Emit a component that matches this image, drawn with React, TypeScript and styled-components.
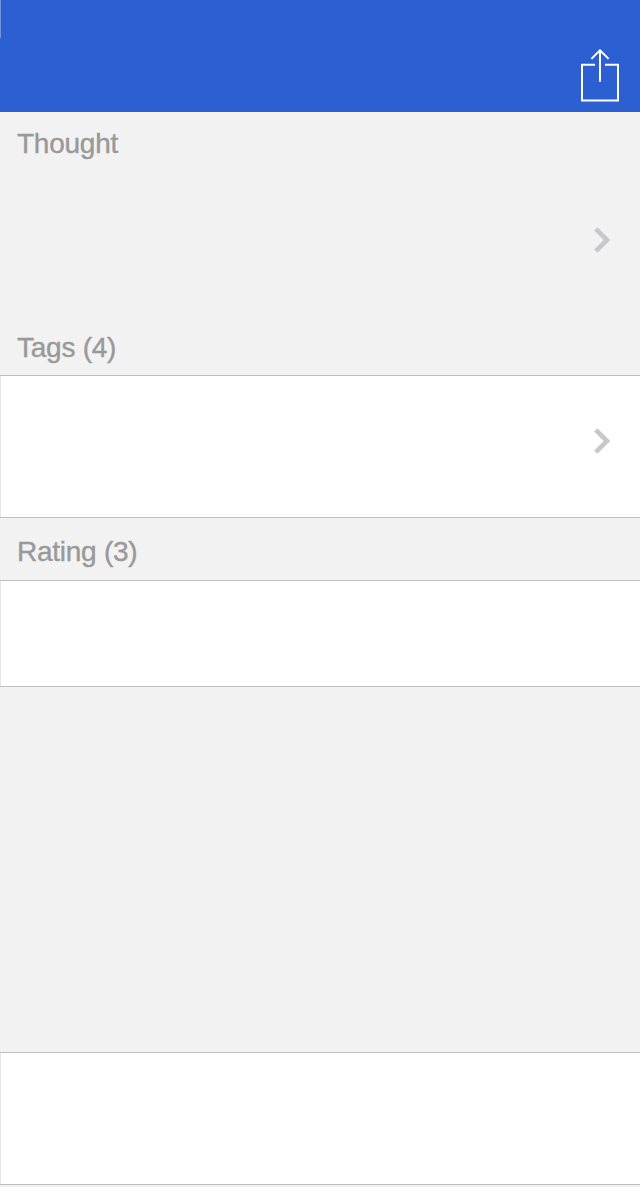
import React from 'react';
import styled, { createGlobalStyle } from 'styled-components';

const GlobalStyle = createGlobalStyle`
  * { box-sizing: border-box; }
  body {
    margin: 0;
    background: #f2f2f2;
    font-family: "Liberation Sans", Arial, sans-serif;
  }
`;

const Screen = styled.main`
  display: flex;
  flex-direction: column;
  width: 640px;
  height: 1187px;
  overflow: hidden;
  background: #f2f2f2;
`;

const NavBar = styled.header`
  display: flex;
  justify-content: flex-end;
  align-items: flex-end;
  flex: none;
  height: 112px;
  padding: 0 20px 9px 0;
  background: linear-gradient(#7391dc, #7391dc) 0 0 / 1px 38px no-repeat #2c5fd1;
`;

const IconButton = styled.button`
  display: block;
  width: 40px;
  height: 54px;
  padding: 0;
  border: 0;
  background: none;
  svg { display: block; }
`;

const SectionTitle = styled.h2<{ $height: number; $top?: number }>`
  flex: none;
  height: ${(p) => p.$height}px;
  margin: 0;
  padding: ${(p) => p.$top ?? 16}px 0 0 17px;
  color: #999;
  font-size: 28px;
  font-weight: 400;
  line-height: 32px;
  letter-spacing: -0.25px;
  -webkit-text-stroke: 0.4px #999;
`;

const Row = styled.div<{ $height: number; $plain?: boolean }>`
  display: flex;
  align-items: center;
  justify-content: flex-end;
  flex: none;
  height: ${(p) => p.$height}px;
  padding-right: 28px;
  background: ${(p) => (p.$plain ? 'transparent' : '#fff')};
  ${(p) =>
    !p.$plain &&
    `
    border-top: 1px solid #bfbfbf;
    border-bottom: 1px solid #bfbfbf;
    box-shadow: inset 1px 0 #e6e6e6;
  `}
`;

const ChevronIcon = styled.svg`
  display: block;
  margin-bottom: 11px;
`;

const Spacer = styled.div`
  flex: none;
  height: 365px;
`;

function Chevron() {
  return (
    <ChevronIcon width="20" height="28" viewBox="0 0 20 28" fill="none">
      <path d="M3.8 2.8 15 14 3.8 25.2" stroke="#c7c7cc" strokeWidth="4.6" />
    </ChevronIcon>
  );
}

function ShareIcon() {
  return (
    <svg width="40" height="54" viewBox="0 0 40 54" fill="none" stroke="#fff" strokeWidth="2">
      <path d="M15 15.8H2V51.6H38V15.8H25" />
      <path d="M20 32.8V1.5M11.4 9.9 20 1.3 28.6 9.9" />
    </svg>
  );
}

export default function App() {
  return (
    <>
      <GlobalStyle />
      <Screen>
        <NavBar>
          <IconButton aria-label="Share">
            <ShareIcon />
          </IconButton>
        </NavBar>
        <SectionTitle $height={63}>Thought</SectionTitle>
        <Row $height={141} $plain>
          <Chevron />
        </Row>
        <SectionTitle $height={59}>Tags (4)</SectionTitle>
        <Row $height={143}>
          <Chevron />
        </Row>
        <SectionTitle $height={62} $top={18}>Rating (3)</SectionTitle>
        <Row $height={107} />
        <Spacer />
        <Row $height={133} />
      </Screen>
    </>
  );
}
